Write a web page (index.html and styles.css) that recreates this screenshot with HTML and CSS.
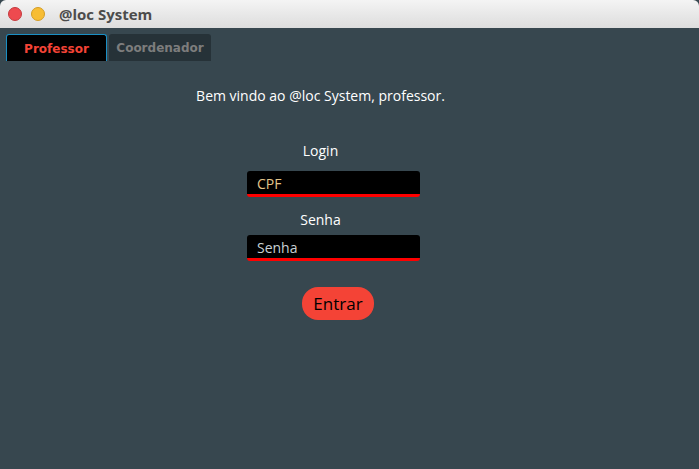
FILE: index.html
```html
<!DOCTYPE html>
<html>
<head>
<meta charset="utf-8">
<link rel="stylesheet" href="styles.css">
</head>
<body>
<div class="window">
  <div class="titlebar">
    <span class="dot close"></span>
    <span class="dot min"></span>
    <span class="title">@loc System</span>
  </div>
  <div class="content">
    <div class="tabs">
      <div class="tab active">Professor</div>
      <div class="tab">Coordenador</div>
    </div>
    <div class="form">
      <div class="welcome">Bem vindo ao @loc System, professor.</div>
      <div class="label login-label">Login</div>
      <div class="field cpf">CPF</div>
      <div class="label senha-label">Senha</div>
      <div class="field senha">Senha</div>
      <div class="btn">Entrar</div>
    </div>
  </div>
</div>
</body>
</html>
```

FILE: styles.css
```css
html, body { margin: 0; padding: 0; }
body { width: 699px; height: 469px; overflow: hidden; font-family: "Open Sans", "DejaVu Sans", sans-serif; }
.window { width: 699px; height: 469px; display: flex; flex-direction: column; background: #37474f; }
.titlebar {
  height: 28px; flex: none; display: flex; align-items: center;
  background: linear-gradient(#f4f4f4, #dddddd);
  border-radius: 6px 6px 0 0;
}
.dot { border-radius: 50%; display: inline-block; }
.close { background: #ee4a4f; margin-left: 8px; border: 0.5px solid #c43b3f; width: 12px; height: 12px; }
.min { background: #f7bd34; margin-left: 9px; border: 0.5px solid #d49d25; width: 12px; height: 12px; }
.title { margin-left: 14px; font-weight: bold; font-size: 15px; color: #4c4c4c; font-family: "Open Sans", "DejaVu Sans", sans-serif; }
.content { flex: 1; display: flex; flex-direction: column; }
.tabs { display: flex; padding: 6px 0 0 6px; gap: 2px; height: 27px; }
.tab {
  width: 102px; height: 27px; box-sizing: border-box; display: flex; align-items: center; justify-content: center;
  font-weight: bold; color: #7d7d7d; background: #263238; border-radius: 3px 3px 0 0;
  font-family: "DejaVu Sans", sans-serif; font-size: 12px; padding-top: 1px;
}
.tab.active { width: 101px; background: #000; color: #f44336; border: 1px solid #1a8fc4; border-bottom: none; }
.form { display: flex; flex-direction: column; margin-left: 195px; width: 251px; }
.welcome { color: #ffffff; font-size: 14px; line-height: 16px; margin-top: 27px; white-space: nowrap; text-align: center; }
.label { color: #ffffff; font-size: 14px; line-height: 16px; text-align: center; }
.login-label { margin-top: 39px; }
.field {
  width: 173px; height: 26px; box-sizing: border-box; margin-left: 52px; background: #000;
  border-bottom: 3px solid #ff0000; border-radius: 3px; padding-left: 10px; font-size: 14px;
  display: flex; align-items: center; padding-top: 2px;
}
.cpf { margin-top: 12px; color: #e3c58a; }
.senha-label { margin-top: 15px; }
.senha { margin-top: 7px; color: #c8d0d4; }
.btn {
  margin-top: 26px; margin-left: 107px; width: 72px; height: 33px; border-radius: 16px;
  background: #f44336; color: #000; font-size: 17px; display: flex; align-items: center; justify-content: center;
}
```
